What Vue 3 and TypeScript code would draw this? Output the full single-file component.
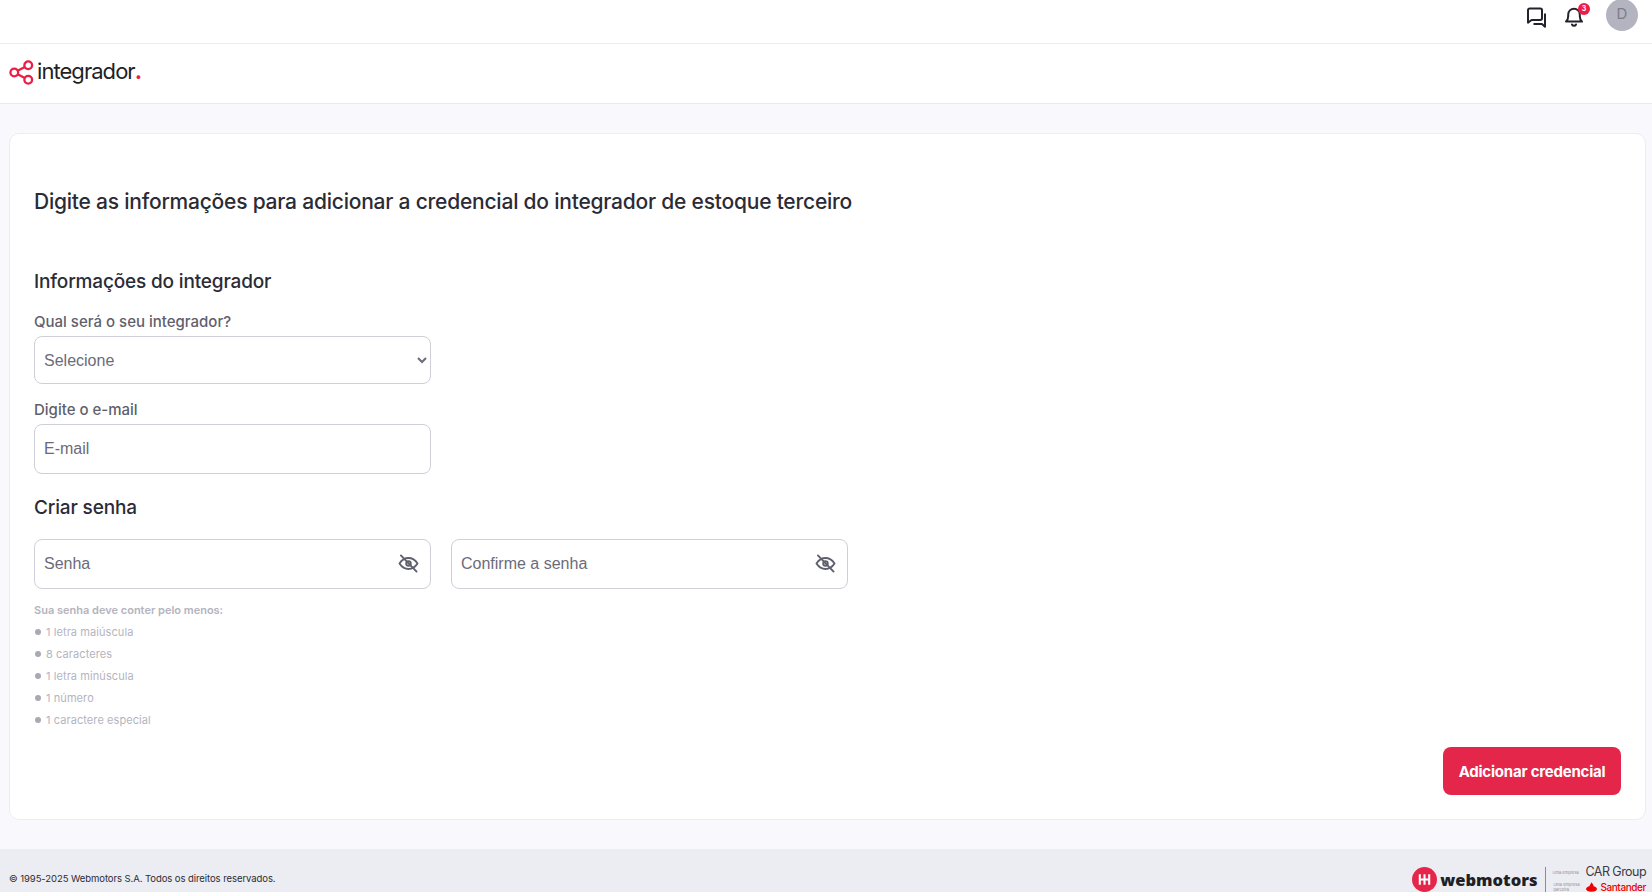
<script setup lang="ts">
const rules: string[] = ['1 letra maiúscula', '8 caracteres', '1 letra minúscula', '1 número', '1 caractere especial']
const passwords: string[] = ['Senha', 'Confirme a senha']
</script>

<template>
  <div class="page">
    <div class="topbar">
      <svg class="chat" width="22" height="22" viewBox="0 0 22 22" fill="none" stroke="#23232d" stroke-width="2" stroke-linejoin="round">
        <path d="M2 4.2a1.7 1.7 0 0 1 1.7-1.7h10.6A1.7 1.7 0 0 1 16 4.2v8.1a1.7 1.7 0 0 1-1.7 1.7H5.6L2 16.6z" />
        <path d="M19 7.5v13.2L16 18H7.5" />
      </svg>
      <div class="bell">
        <svg width="22" height="22" viewBox="0 0 22 22" fill="none" stroke="#23232d" stroke-width="2" stroke-linejoin="round" stroke-linecap="round">
          <path d="M3 16.5c1.6-1.3 2.2-2.6 2.2-5.2V9.500a5.800 5.800 0 0 1 11.600 0v1.800c0 2.600.6 3.900 2.200 5.200z" />
          <path d="M9 19.500a2.200 2.200 0 0 0 4 0" />
        </svg>
        <span class="badge">3</span>
      </div>
      <div class="avatar">D</div>
    </div>

    <header class="brand">
      <svg class="logo-mark" width="25" height="25" viewBox="0 0 26 25" fill="none" stroke="#ed1d45" stroke-width="2.4">
        <circle cx="5.500" cy="12.500" r="4" />
        <circle cx="20" cy="5" r="4" />
        <circle cx="20" cy="20" r="4" />
        <path d="M9 10.700 16.500 6.800M9 14.300l7.500 3.900" />
      </svg>
      <span class="logo-text">integrador<span class="logo-dot">.</span></span>
    </header>

    <main class="main">
      <section class="card">
        <h1 class="title">Digite as informações para adicionar a credencial do integrador de estoque terceiro</h1>

        <h2 class="section first">Informações do integrador</h2>
        <label class="label">Qual será o seu integrador?</label>
        <select class="field select">
          <option>Selecione</option>
        </select>

        <label class="label second">Digite o e-mail</label>
        <input class="field" type="text" placeholder="E-mail" />

        <h2 class="section pw">Criar senha</h2>
        <div class="pw-row">
          <div v-for="p in passwords" :key="p" class="pw-wrap">
            <input class="field pw-input" type="password" :placeholder="p" />
            <svg class="eye" width="21" height="19" viewBox="0 0 22 20" fill="none" stroke="#5f5f6e" stroke-width="2" stroke-linecap="round" stroke-linejoin="round">
              <path d="M1.500 10C4 6.200 7.200 4.200 11 4.200s7 2 9.500 5.800c-2.500 3.800-5.700 5.800-9.500 5.800S4 13.800 1.500 10z" />
              <circle cx="11" cy="10" r="2.400" />
              <path d="M3 1.500 19.500 18.500" />
            </svg>
          </div>
        </div>

        <p class="hint-title">Sua senha deve conter pelo menos:</p>
        <ul class="rules">
          <li v-for="r in rules" :key="r" class="rule">{{ r }}</li>
        </ul>

        <div class="actions">
          <button class="btn" type="button">Adicionar credencial</button>
        </div>
      </section>
    </main>

    <footer class="footer">
      <span class="copy">© 1995-2025 Webmotors S.A. Todos os direitos reservados.</span>
      <div class="partners">
        <div class="wm">
          <svg width="25" height="25" viewBox="0 0 24 24">
            <circle cx="12" cy="12" r="12" fill="#e5264a" />
            <path d="M7.500 7v10M12 7v10M16.500 7v10M7.500 12h9" stroke="#fff" stroke-width="2" fill="none" />
          </svg>
          <span class="wm-text">webmotors</span>
        </div>
        <div class="divider"></div>
        <div class="groups">
          <div class="group">
            <span class="tiny">Uma empresa</span>
            <span class="car">CAR Group</span>
          </div>
          <div class="group">
            <span class="tiny">Uma empresa<br />parceira</span>
            <svg class="flame" width="11" height="10" viewBox="0 0 14 12">
              <path fill="#ec0000" d="M7 0c1 2 3 3 2.600 5.200C11.500 5.600 14 6.700 14 8.500 14 10.500 10.900 12 7 12S0 10.500 0 8.500c0-1.800 2.500-2.900 4.400-3.300C4.400 3.500 6.500 2 7 0z" />
            </svg>
            <span class="sant">Santander</span>
          </div>
        </div>
      </div>
    </footer>
  </div>
</template>

<style scoped>
.page {
  height: 892px;
  overflow: hidden;
  background: #f9f9fd;
  font-family: Inter, "Liberation Sans", sans-serif;
  color: #2b2b36;
  display: flex;
  flex-direction: column;
}
.topbar {
  height: 43px;
  flex: none;
  background: #fff;
  border-bottom: 1px solid #ecedf1;
  display: flex;
  align-items: flex-start;
  justify-content: flex-end;
  padding-right: 14px;
  box-sizing: content-box;
}
.chat { margin-top: 6px; margin-right: 1px; }
.bell { position: relative; margin-left: 14px; margin-top: 5px; width: 22px; height: 22px; }
.badge {
  position: absolute;
  top: -2px;
  right: -5px;
  width: 12px;
  height: 12px;
  border-radius: 50%;
  background: #ed1d45;
  color: #fff;
  font-size: 7px;
  font-weight: 700;
  line-height: 12px;
  text-align: center;
}
.avatar {
  width: 32px;
  height: 32px;
  margin-left: 21px;
  margin-top: -1px;
  border-radius: 50%;
  background: #b4b4c0;
  color: #7d7d8b;
  font-size: 15px;
  line-height: 30px;
  text-align: center;
}
.brand {
  height: 59px;
  flex: none;
  background: #fff;
  border-bottom: 1px solid #e8e8ee;
  display: flex;
  align-items: flex-start;
  padding-left: 9px;
}
.logo-mark { margin-top: 16px; }
.logo-text {
  margin-left: 3px;
  margin-top: 13px;
  font-family: Inter, sans-serif;
  font-size: 22px;
  line-height: 28px;
  color: #1f1f26;
  letter-spacing: -0.95px;
}
.logo-dot { color: #ed1d45; font-weight: 700; }
.main {
  flex: none;
  padding: 29px 6px 29px 9px;
}
.card {
  height: 687px;
  box-sizing: border-box;
  background: #fff;
  border: 1px solid #ecedf2;
  border-radius: 10px;
  padding: 54px 24px 0 24px;
  display: flex;
  flex-direction: column;
  align-items: flex-start;
}
.title {
  margin: 0;
  font-size: 21px;
  line-height: 28px;
  font-weight: 500;
  letter-spacing: -0.22px;
  color: #2b2b36;
}
.section {
  margin: 0;
  font-size: 19px;
  line-height: 26px;
  font-weight: 500;
  letter-spacing: -0.16px;
  color: #2b2b36;
}
.section.first { margin-top: 53px; }
.section.pw { margin-top: 21px; }
.label {
  margin-top: 17px;
  font-size: 15px;
  line-height: 20px;
  font-weight: 500;
  color: #5f5f6e;
}
.label.second { margin-top: 16px; }
.field {
  display: block;
  width: 397px;
  height: 50px;
  margin-top: 4px;
  box-sizing: border-box;
  border: 1px solid #cfcfd9;
  border-radius: 8px;
  background: #fff;
  padding: 0 9px;
  font-family: "Liberation Sans", Arial, sans-serif;
  font-size: 16px;
  color: #6b6b7a;
  outline: none;
}
.field::placeholder { color: #6b6b7a; opacity: 1; }
.select { height: 48px; padding-left: 5px; }
.pw-row {
  display: flex;
  gap: 20px;
  margin-top: 18px;
}
.pw-wrap { position: relative; }
.pw-input { margin-top: 0; }
.eye { position: absolute; right: 12px; top: 15px; }
.hint-title {
  margin: 13px 0 0;
  font-size: 11px;
  line-height: 16px;
  font-weight: 600;
  color: #b4b4c0;
}
.rules {
  list-style: none;
  margin: 0;
  padding: 0;
}
.rule {
  position: relative;
  margin-top: 6px;
  padding-left: 12px;
  font-size: 11px;
  line-height: 16px;
  letter-spacing: 0.08px;
  color: #b4b4c0;
}
.rule::before {
  content: "";
  position: absolute;
  left: 1px;
  top: 5px;
  width: 6px;
  height: 6px;
  border-radius: 50%;
  background: #a9a9b5;
}
.actions {
  align-self: stretch;
  display: flex;
  justify-content: flex-end;
  margin-top: 19px;
}
.btn {
  width: 178px;
  height: 48px;
  border: none;
  border-radius: 8px;
  background: #e3264a;
  color: #fff;
  font-family: Inter, "Liberation Sans", sans-serif;
  font-size: 15px;
  font-weight: 700;
  letter-spacing: -0.22px;
}
.footer {
  flex: none;
  height: 60px;
  background: #ecedf2;
  display: flex;
  justify-content: space-between;
  align-items: flex-start;
  padding: 0 6px 0 9px;
}
.copy {
  margin-top: 23px;
  font-size: 9.500px;
  line-height: 14px;
  letter-spacing: -0.07px;
  color: #2b2b36;
}
.partners {
  display: flex;
  align-items: flex-start;
  margin-top: 18px;
}
.wm { display: flex; align-items: center; gap: 3px; }
.wm-text {
  font-family: "Open Sans", sans-serif;
  font-size: 16.500px;
  line-height: 24px;
  font-weight: 800;
  color: #1f1f26;
}
.divider {
  width: 1px;
  height: 26px;
  margin: 0 7px 0 7px;
  background: #8c8c98;
}
.groups { display: flex; flex-direction: column; gap: 3px; margin-top: -1px; }
.group { display: flex; align-items: center; gap: 3px; height: 12px; justify-content: flex-end; }
.tiny {
  width: 30px;
  font-size: 4px;
  line-height: 5px;
  color: #8c8c98;
}
.car { font-size: 12.500px; line-height: 12px; color: #3a3a44; letter-spacing: -0.55px; white-space: nowrap; }
.sant { font-size: 10px; line-height: 12px; color: #ec0000; font-weight: 500; letter-spacing: -0.4px; }
</style>
